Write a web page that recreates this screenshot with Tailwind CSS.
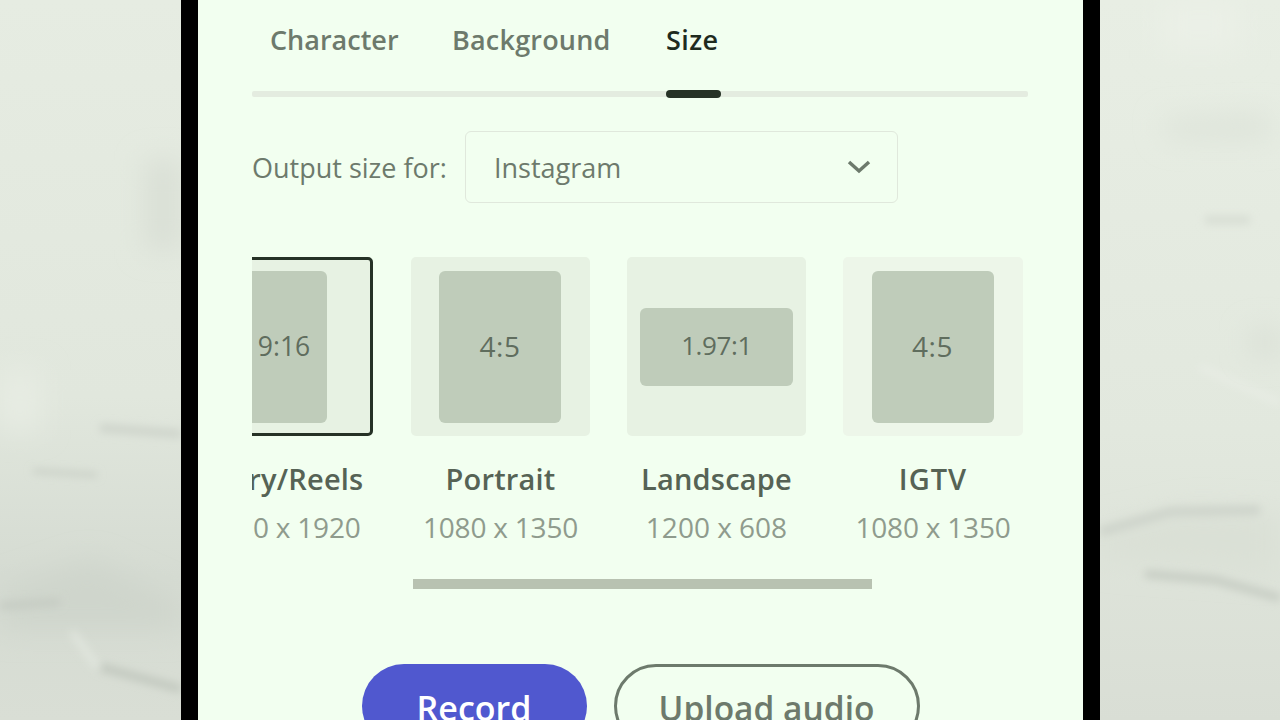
<!DOCTYPE html>
<html lang="en">
<head>
  <meta charset="UTF-8">
  <title>Size</title>
  <script src="https://cdn.jsdelivr.net/npm/@tailwindcss/browser@4"></script>
</head>
<body class="bg-[#e4e6e0]">
  <div class="flex w-[1280px] h-[720px] overflow-hidden font-['Open_Sans',sans-serif]">
    <!-- Left backdrop: crumpled paper -->
    <svg class="block w-[181px] h-[720px] shrink-0" viewBox="0 0 181 720">
      <defs>
        <linearGradient id="paperL" x1="0" y1="0" x2="0" y2="1">
          <stop offset="0" stop-color="#e6ece2"/><stop offset="0.55" stop-color="#e1e7dd"/><stop offset="0.8" stop-color="#d5dbd2"/><stop offset="1" stop-color="#d9ded5"/>
        </linearGradient>
        <filter id="soft" filterUnits="userSpaceOnUse" x="-20" y="0" width="221" height="720"><feGaussianBlur stdDeviation="4"/></filter>
        <filter id="softer" filterUnits="userSpaceOnUse" x="-40" y="0" width="261" height="720"><feGaussianBlur stdDeviation="14"/></filter>
      </defs>
      <rect width="181" height="720" fill="url(#paperL)"/>
      <path d="M0 370h40v60H0z" fill="#e7ece3" filter="url(#softer)"/>
      <path d="M145 160h36v90h-36z" fill="#d9dfd5" filter="url(#softer)"/>
      <path d="M0 590l90-30 91 40v30H0z" fill="#cfd5cc" filter="url(#softer)"/>
      <path d="M100 428l81 6" stroke="#cdd3ca" stroke-width="8" filter="url(#soft)"/>
      <path d="M33 471l64 4" stroke="#c4cac1" stroke-width="4" filter="url(#soft)"/>
      <path d="M0 606l60-4" stroke="#c5cbc2" stroke-width="7" filter="url(#soft)"/>
      <path d="M100 667l81 22" stroke="#c1c7be" stroke-width="8" filter="url(#soft)"/>
      <path d="M72 632l26 36" stroke="#e4e9e1" stroke-width="5" filter="url(#soft)"/>
    </svg>

    <!-- Phone -->
    <div class="w-[919px] shrink-0 bg-black px-[17px]">
      <div class="h-[720px] bg-[#f2fff0] flex flex-col">
        <div class="pl-[54px] pr-[55px]">
          <!-- Tabs -->
          <div class="flex h-[80px] items-center pl-[18px] text-[27px] font-semibold text-[#6d7a6c]">
            <span class="w-[182px] whitespace-nowrap">Character</span>
            <span class="w-[214px] whitespace-nowrap tracking-[0.2px]">Background</span>
            <span class="text-[#1f2b1f] whitespace-nowrap tracking-[0.4px]">Size</span>
          </div>
          <div class="relative h-[6px] mt-[11px] bg-[#e4ece0] rounded-[2px]">
            <div class="absolute left-[414px] top-[-1px] w-[55px] h-[8px] bg-[#263226] rounded-full"></div>
          </div>

          <!-- Output size -->
          <div class="flex items-center mt-[34px] gap-[18px]">
            <span class="w-[195px] pt-[2px] text-[27px] text-[#6d7a6c] whitespace-nowrap">Output size for:</span>
            <div class="flex items-center justify-between w-[433px] h-[72px] pl-[28px] pr-[26px] border-[1.5px] border-[#e0e8dc] rounded-[6px] text-[27px] text-[#6d7a6c]">
              <span class="pt-[2px]">Instagram</span>
              <svg width="24" height="14" viewBox="0 0 24 14" fill="none" stroke="#6d7a6c" stroke-width="3.5"><path d="M2 2l10 9 10-9"/></svg>
            </div>
          </div>

          <!-- Size cards -->
          <div class="mt-[54px] overflow-hidden">
            <div class="flex gap-[37px] ml-[-59px] w-[1000px]">
              <div class="w-[180px] mr-[1px] text-center">
                <div class="h-[179px] border-[3px] border-[#263226] rounded-[5px] bg-[#e7f2e3] pt-[11px]">
                  <div class="w-[131px] h-[152px] pl-[45px] bg-[#bfccba] rounded-[6px] flex items-center justify-center text-[26.5px] text-[#5f6d5e]">9:16</div>
                </div>
                <div class="mt-[25px] text-[29px] leading-[36px] font-semibold text-[#566355] whitespace-nowrap tracking-[0.2px]">Story/Reels</div>
                <div class="mt-[12px] text-[28px] leading-[36px] text-[#8f9b8d] whitespace-nowrap tracking-[-0.2px]">1080 x 1920</div>
              </div>
              <div class="w-[179px] text-center">
                <div class="h-[179px] pr-[1px] rounded-[5px] bg-[#e7f2e3] flex items-center justify-center">
                  <div class="w-[122px] h-[152px] pb-[2px] bg-[#bfccba] rounded-[6px] flex items-center justify-center text-[28px] tracking-[0.5px] text-[#5f6d5e]">4:5</div>
                </div>
                <div class="mt-[25px] text-[29px] leading-[36px] font-semibold text-[#566355] whitespace-nowrap tracking-[0.2px]">Portrait</div>
                <div class="mt-[12px] text-[28px] leading-[36px] text-[#8f9b8d] whitespace-nowrap tracking-[-0.2px]">1080 x 1350</div>
              </div>
              <div class="w-[179px] text-center">
                <div class="h-[179px] rounded-[5px] bg-[#e7f2e3] flex items-center justify-center">
                  <div class="w-[153px] h-[78px] pb-[2px] bg-[#bfccba] rounded-[6px] flex items-center justify-center text-[26px] tracking-[-0.4px] text-[#5f6d5e]">1.97:1</div>
                </div>
                <div class="mt-[25px] text-[29px] leading-[36px] font-semibold text-[#566355] whitespace-nowrap tracking-[0.2px]">Landscape</div>
                <div class="mt-[12px] text-[28px] leading-[36px] text-[#8f9b8d] whitespace-nowrap">1200 x 608</div>
              </div>
              <div class="w-[180px] text-center">
                <div class="h-[179px] pr-[1px] rounded-[5px] bg-[#edf6e9] flex items-center justify-center">
                  <div class="w-[122px] h-[152px] pb-[2px] bg-[#bfccba] rounded-[6px] flex items-center justify-center text-[28px] tracking-[0.5px] text-[#5f6d5e]">4:5</div>
                </div>
                <div class="mt-[25px] text-[29px] leading-[36px] font-semibold text-[#566355] whitespace-nowrap tracking-[1px]">IGTV</div>
                <div class="mt-[12px] text-[28px] leading-[36px] text-[#8f9b8d] whitespace-nowrap tracking-[-0.2px]">1080 x 1350</div>
              </div>
            </div>
          </div>

          <!-- Scrollbar -->
          <div class="w-[459px] h-[10px] ml-[161px] mt-[34px] bg-[#b8c2b1]"></div>
        </div>

        <div class="h-[2px] ml-[14px] mr-[3px] mt-[46px] bg-[#e6f1e2]"></div>

        <!-- Actions -->
        <div class="flex justify-center gap-[27px] mt-[29px]">
          <div class="w-[225px] h-[84px] shrink-0 pt-[4px] rounded-[42px] bg-[#5058cf] text-white font-semibold text-[34px] flex items-center justify-center">Record</div>
          <div class="w-[306px] h-[84px] shrink-0 pt-[4px] rounded-[42px] border-[3px] border-[#6d7a6c] text-[#6d7a6c] font-semibold text-[33.5px] flex items-center justify-center whitespace-nowrap">Upload audio</div>
        </div>
      </div>
    </div>

    <!-- Right backdrop: crumpled paper -->
    <svg class="block flex-1 h-[720px]" viewBox="0 0 180 720">
      <defs>
        <linearGradient id="paperR" x1="0" y1="0" x2="0" y2="1">
          <stop offset="0" stop-color="#e8eee4"/><stop offset="0.6" stop-color="#e2e8de"/><stop offset="1" stop-color="#d9ded5"/>
        </linearGradient>
        <filter id="softR" filterUnits="userSpaceOnUse" x="-20" y="0" width="220" height="720"><feGaussianBlur stdDeviation="4"/></filter>
        <filter id="softerR" filterUnits="userSpaceOnUse" x="-40" y="0" width="260" height="720"><feGaussianBlur stdDeviation="14"/></filter>
      </defs>
      <rect width="180" height="720" fill="url(#paperR)"/>
      <path d="M60 0h80v50H60z" fill="#ebf0e7" filter="url(#softerR)"/>
      <path d="M60 120l110-6v25H70z" fill="#dde3d9" filter="url(#softerR)"/>
      <path d="M0 530l90-20 90 4v60L0 560z" fill="#dae0d6" filter="url(#softerR)"/>
      <path d="M0 532l70-20 90-2" stroke="#cdd3ca" stroke-width="9" fill="none" filter="url(#softR)"/>
      <path d="M45 574l70 6 65 18" stroke="#c6ccc3" stroke-width="8" fill="none" filter="url(#softR)"/>
      <path d="M100 367l80 36" stroke="#ebefe8" stroke-width="4" filter="url(#softR)"/>
      <path d="M105 220h45" stroke="#d7ddd3" stroke-width="8" filter="url(#softR)"/>
      <path d="M150 330h30v25h-30z" fill="#d9dfd5" filter="url(#softerR)"/>
    </svg>
  </div>
</body>
</html>
